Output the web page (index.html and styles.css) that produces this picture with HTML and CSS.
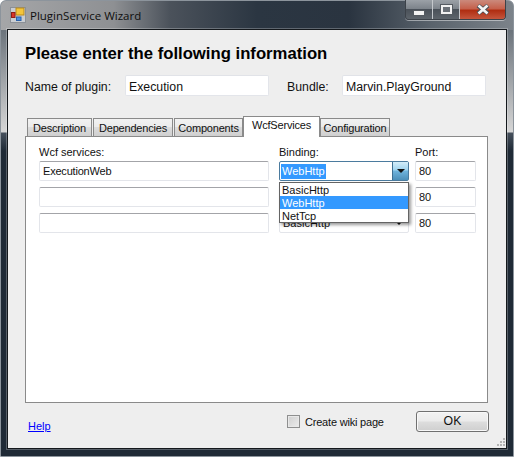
FILE: index.html
```html
<!DOCTYPE html>
<html lang="en">
<head>
  <meta charset="UTF-8" />
  <title>PluginService Wizard</title>
  <link rel="stylesheet" href="styles.css">
</head>
<body>
  <div class="window">
    <div class="titlebar">
      <svg class="app-icon" width="16" height="16" viewBox="0 0 16 16">
        <rect x="0.5" y="0.5" width="15" height="15" fill="#c9cdd2" stroke="#8b9097"/>
        <rect x="6" y="1" width="8" height="7" fill="#f3c53a" stroke="#b98a1c"/>
        <rect x="1.5" y="5.5" width="3.5" height="5" fill="#d8342a" stroke="#8e2018"/>
        <rect x="6.5" y="10" width="4.5" height="3.5" fill="#4a8fe0" stroke="#2d62a8"/>
      </svg>
      <span class="title-text">PluginService Wizard</span>
      <div class="caption-buttons">
        <div class="cap-btn cap-min"><span class="min-glyph"></span></div>
        <div class="cap-btn cap-max"><span class="max-glyph"></span></div>
        <div class="cap-btn cap-close">
          <svg width="14" height="11" viewBox="0 0 14 11">
            <path d="M2 1.5 L12 9.5 M12 1.5 L2 9.5" stroke="#4a4f55" stroke-width="4.4" fill="none"/>
            <path d="M2.5 1.5 L11.5 9.5 M11.5 1.5 L2.5 9.5" stroke="#f4f4f4" stroke-width="2.6" fill="none"/>
          </svg>
        </div>
      </div>
    </div>

    <div class="client">
      <h1 class="heading">Please enter the following information</h1>

      <div class="top-form">
        <label class="top-label name-label">Name of plugin:</label>
        <div class="field top-field">Execution</div>
        <label class="top-label bundle-label">Bundle:</label>
        <div class="field top-field">Marvin.PlayGround</div>
      </div>

      <div class="tabs">
        <div class="tab tab-desc">Description</div>
        <div class="tab tab-deps">Dependencies</div>
        <div class="tab tab-comp">Components</div>
        <div class="tab tab-active">WcfServices</div>
        <div class="tab tab-conf">Configuration</div>
      </div>

      <div class="panel">
        <div class="grid">
          <div class="col-label">Wcf services:</div>
          <div class="col-label col-binding">Binding:</div>
          <div class="col-label">Port:</div>

          <div class="field">ExecutionWeb</div>
          <div class="combo combo-open">
            <span class="combo-selected">WebHttp</span>
            <div class="combo-btn"><span class="arrow"></span></div>
            <div class="dropdown">
              <div class="option">BasicHttp</div>
              <div class="option option-on">WebHttp</div>
              <div class="option">NetTcp</div>
            </div>
          </div>
          <div class="field">80</div>

          <div class="field"></div>
          <div class="combo"></div>
          <div class="field">80</div>

          <div class="field"></div>
          <div class="combo"><span>BasicHttp</span><span class="arrow"></span></div>
          <div class="field">80</div>
        </div>
      </div>

      <div class="footer">
        <a class="help" href="#">Help</a>
        <div class="check-box"></div>
        <span class="check-label">Create wiki page</span>
        <div class="ok-btn">OK</div>
      </div>

      <svg class="grip" width="11" height="11" viewBox="0 0 11 11">
        <path d="M8 1h2v2H8z M5 4h2v2H5z M8 4h2v2H8z M2 7h2v2H2z M5 7h2v2H5z M8 7h2v2H8z" fill="#b4b4b4"/>
      </svg>
    </div>
  </div>
</body>
</html>
```

FILE: styles.css
```css
* {
  box-sizing: border-box;
}
html, body {
  margin: 0;
  padding: 0;
}
body {
  width: 514px;
  height: 457px;
  overflow: hidden;
  background: #fff;
  font-family: "Liberation Sans", Arial, sans-serif;
  font-size: 11px;
  color: #111;
}
.window {
  width: 514px;
  height: 457px;
  display: flex;
  flex-direction: column;
  padding: 0 7px 7px 7px;
  border: 1px solid #8c949c;
  border-radius: 6px 6px 0 0;
  background:
    linear-gradient(90deg, #a5a6a8 0, #8e9093 22%, #4b525b 33%, #2b3642 50%, #2a3440 68%, #5a636c 84%, #7c838a 100%) top / 100% 29px no-repeat,
    linear-gradient(180deg, #6c747c 0, #6c747c 30px, #d6d6d6 131px, #46505c 132px, #1f2a36 150px, #1f2a36 100%);
}

/* title bar */
.titlebar {
  height: 28px;
  margin: 0 -7px 0 -1px;
  padding-left: 2px;
  display: flex;
  align-items: center;
  position: relative;
}
.app-icon {
  margin: 0 4px 0 1px;
  flex: none;
}
.title-text {
  font-family: "Open Sans", sans-serif;
  font-size: 11.5px;
  color: #0e0e0e;
}
.caption-buttons {
  display: flex;
  margin-left: auto;
  margin-right: 7px;
  align-self: flex-start;
  height: 20px;
  margin-top: -1px;
  border: 1px solid #3c4249;
  border-top: none;
  border-radius: 0 0 4px 4px;
  box-shadow: 0 1px 0 rgba(255,255,255,0.45);
  overflow: hidden;
}
.cap-btn {
  display: flex;
  align-items: center;
  justify-content: center;
  border-right: 1px solid #c4c8cc;
}
.cap-min, .cap-max {
  width: 27px;
  background: linear-gradient(180deg, #9ba1a7 0, #7d848b 45%, #4a5159 50%, #5d646b 100%);
}
.cap-close {
  width: 45px;
  border-right: none;
  background: linear-gradient(180deg, #cb8a7c 0, #c5614c 45%, #b02e12 55%, #c5563d 100%);
}
.min-glyph {
  display: block;
  width: 10px;
  height: 4px;
  margin-top: 6px;
  background: #f3f3f3;
  box-shadow: 0 0 0 1px #555b61;
}
.max-glyph {
  display: block;
  width: 11px;
  height: 9px;
  border: 2px solid #f0f0f0;
  background: #6a7077;
  box-shadow: 0 0 0 1px #555b61;
}

/* client area */
.client {
  flex: 1;
  position: relative;
  margin-left: -1px;
  margin-right: -1px;
  background: #eeeeee;
  border: 1px solid #14181c;
  box-shadow: 0 0 0 1px rgba(255,255,255,0.25);
  padding: 0 17px;
}
.heading {
  margin: 14px 0 0 0;
  height: 20px;
  font-size: 16.7px;
  line-height: 20px;
  font-weight: bold;
  color: #000;
}
.top-form {
  margin-top: 11px;
  display: flex;
  align-items: center;
  height: 21px;
}
.top-label {
  font-size: 12.3px;
  padding-top: 2px;
}
.name-label {
  width: 100px;
}
.bundle-label {
  margin-left: 18px;
  width: 55px;
}
.field {
  height: 20px;
  line-height: 19px;
  padding: 0 3px;
  background: #fff;
  border: 1px solid #e3e5ea;
  border-top-color: #a3a4a8;
  border-radius: 2px;
  white-space: nowrap;
  letter-spacing: -0.2px;
}
.top-field {
  width: 144px;
  height: 21px;
  font-size: 12.3px;
  line-height: 22px;
  border-top-color: #e1e3e8;
  letter-spacing: 0;
}

/* tabs */
.tabs {
  margin-top: 20px;
  height: 20px;
  display: flex;
  align-items: flex-end;
  padding-left: 2px;
  position: relative;
  z-index: 1;
}
.tab {
  height: 18px;
  line-height: 18px;
  text-align: center;
  letter-spacing: -0.2px;
  white-space: nowrap;
  border: 1px solid #8a8a8a;
  border-bottom: none;
  background: linear-gradient(180deg, #f2f2f2 0, #ebebeb 45%, #dcdcdc 50%, #cfcfcf 100%);
}
.tab-desc {
  width: 65px;
  margin-right: 1px;
}
.tab-deps {
  width: 80px;
  margin-right: 1px;
}
.tab-comp {
  width: 69px;
}
.tab-active {
  width: 77px;
  height: 21px;
  margin-bottom: -1px;
  line-height: 17px;
  background: #fff;
}
.tab-conf {
  width: 70px;
}
.panel {
  width: 463px;
  height: 267px;
  background: #fff;
  border: 1px solid #8a8a8a;
  padding: 8px 13px 0 13px;
}
.grid {
  display: grid;
  grid-template-columns: 230px 146px 61px;
  grid-auto-rows: 20px;
  row-gap: 6px;
  grid-template-rows: 10px;
}
.col-label {
  height: 13px;
  line-height: 13px;
  margin-top: 1px;
}
.col-binding {
  margin-left: 10px;
}

/* combo boxes */
.combo {
  position: relative;
  width: 130px;
  height: 20px;
  margin-left: 10px;
  padding: 0 5px 0 3px;
  background: #fff;
  border: 1px solid #e3e5ea;
  border-radius: 2px;
  display: flex;
  align-items: center;
  justify-content: space-between;
}
.arrow {
  display: block;
  width: 0;
  height: 0;
  border-left: 4px solid transparent;
  border-right: 4px solid transparent;
  border-top: 4px solid #111;
}
.combo-open {
  border-color: #4b7b9e;
  padding: 0 0 0 1px;
}
.combo-selected {
  background: #3399ff;
  color: #fff;
  padding: 0 1px;
  line-height: 15px;
}
.combo-btn {
  width: 16px;
  height: 18px;
  display: flex;
  align-items: center;
  justify-content: center;
  background: linear-gradient(180deg, #d4edf9 0, #9fd3ef 45%, #6fb3dc 50%, #4d8fb9 100%);
  border-left: 1px solid #3e6f92;
}
.dropdown {
  position: absolute;
  left: -1px;
  top: 20px;
  width: 130px;
  height: 41px;
  background: #fff;
  border: 1px solid #646464;
  box-shadow: 2px 2px 3px rgba(0,0,0,0.4);
  z-index: 5;
}
.option {
  height: 13px;
  line-height: 14px;
  padding-left: 2px;
}
.option-on {
  background: #3399ff;
  color: #fff;
}

/* footer */
.footer {
  display: flex;
  align-items: center;
  height: 21px;
  margin-top: 8px;
  padding-left: 3px;
}
.help {
  color: #0000ff;
  text-decoration: underline;
  width: 259px;
  margin-top: 8px;
}
.check-box {
  width: 13px;
  height: 13px;
  border: 1px solid #8e8f8f;
  background: linear-gradient(135deg, #cfcfcf, #ececec);
  box-shadow: inset 0 0 0 1px #e8e8e8;
}
.check-label {
  margin-left: 5px;
  width: 111px;
  letter-spacing: -0.2px;
}
.ok-btn {
  width: 73px;
  height: 21px;
  line-height: 19px;
  text-align: center;
  font-size: 12.3px;
  border: 1px solid #707070;
  border-radius: 3px;
  background: linear-gradient(180deg, #f2f2f2 0, #ebebeb 48%, #dddddd 52%, #cfcfcf 100%);
  box-shadow: inset 0 0 0 1px #f8f8f8;
}
.grip {
  position: absolute;
  right: 0;
  bottom: 0;
}
```
